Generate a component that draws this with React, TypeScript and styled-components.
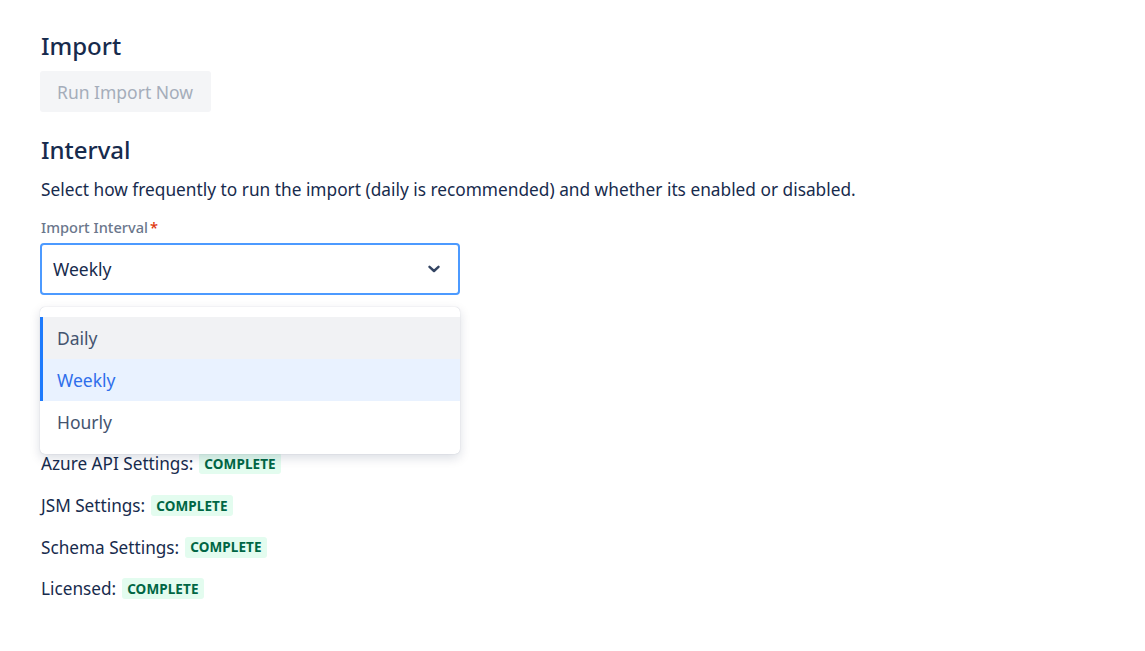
import React from "react";
import styled, { createGlobalStyle } from "styled-components";

const Global = createGlobalStyle`
  html, body { margin: 0; padding: 0; background: #fff; }
  body { font-family: "Noto Sans", "Open Sans", sans-serif; color: #172B4D; }
  * { box-sizing: border-box; }
`;

const Page = styled.div`
  padding: 30px 40px 30px 41px;
  display: flex;
  flex-direction: column;
  align-items: flex-start;
`;

const Heading = styled.h2<{ $top?: number }>`
  margin: ${(p) => p.$top ?? 0}px 0 0;
  font-size: 24px;
  font-weight: 500;
  line-height: 32px;
  color: #172B4D;
`;

const Button = styled.button`
  margin-top: 9px;
  margin-left: -1px;
  height: 41px;
  padding: 0 18px 0 17px;
  border: none;
  border-radius: 3px;
  background: #F4F5F7;
  color: #A5ADBA;
  font-family: inherit;
  font-size: 17.5px;
  cursor: not-allowed;
`;

const Description = styled.p`
  margin: 11px 0 0;
  font-size: 17.3px;
  line-height: 26px;
`;

const Label = styled.label`
  margin-top: 14px;
  font-size: 14.6px;
  line-height: 20px;
  color: #6B778C;
  font-weight: 500;
  display: flex;
  gap: 2px;
`;

const Required = styled.span`
  color: #DE350B;
`;

const Field = styled.div`
  position: relative;
  margin-top: 6px;
  margin-left: -1px;
  margin-bottom: 148px;
  width: 420px;
`;

const SelectBox = styled.div`
  height: 52px;
  border: 2px solid #4C9AFF;
  border-radius: 4px;
  display: flex;
  align-items: center;
  justify-content: space-between;
  padding: 0 18px 0 11px;
  font-size: 17.5px;
  color: #172B4D;
  background: #fff;
`;

const Menu = styled.div`
  position: absolute;
  top: 64px;
  left: 0;
  width: 420px;
  padding: 10px 0 11px;
  background: #fff;
  border-radius: 5px;
  box-shadow: 0 4px 11px rgba(9, 30, 66, 0.15), 0 0 1px rgba(9, 30, 66, 0.25);
  z-index: 2;
`;

const Option = styled.div<{ $state?: "hover" | "selected" }>`
  height: 42px;
  display: flex;
  align-items: center;
  padding-left: 14px;
  font-size: 17.5px;
  border-left: 3px solid
    ${(p) => (p.$state ? "#1D7AFC" : "transparent")};
  background: ${(p) =>
    p.$state === "hover" ? "#F1F2F4" : p.$state === "selected" ? "#E9F2FF" : "#fff"};
  color: ${(p) => (p.$state === "selected" ? "#2F6FEB" : "#44546F")};
`;

const StatusList = styled.div`
  display: flex;
  flex-direction: column;
`;

const StatusRow = styled.div`
  height: 41.7px;
  display: flex;
  align-items: center;
  gap: 6px;
  font-size: 17.2px;
  color: #172B4D;
`;

const Lozenge = styled.span`
  display: inline-flex;
  align-items: center;
  height: 21px;
  padding: 0 5px;
  border-radius: 3px;
  background: #E3FCEF;
  color: #006644;
  font-size: 13.5px;
  font-weight: 700;
  text-transform: uppercase;
  letter-spacing: 0.1px;
`;

const Chevron = () => (
  <svg width="12" height="8" viewBox="0 0 12 8">
    <path d="M1.5 1.8 6 6 10.5 1.8" fill="none" stroke="#344563" strokeWidth="2.4" strokeLinecap="round" strokeLinejoin="round" />
  </svg>
);

const statuses = ["Azure API Settings:", "JSM Settings:", "Schema Settings:", "Licensed:"];

export default function App() {
  return (
    <>
      <Global />
      <Page>
        <Heading>Import</Heading>
        <Button disabled>Run Import Now</Button>
        <Heading $top={22}>Interval</Heading>
        <Description>
          Select how frequently to run the import (daily is recommended) and whether its enabled or disabled.
        </Description>
        <Label>
          Import Interval<Required>*</Required>
        </Label>
        <Field>
          <SelectBox>
            <span>Weekly</span>
            <Chevron />
          </SelectBox>
          <Menu>
            <Option $state="hover">Daily</Option>
            <Option $state="selected">Weekly</Option>
            <Option>Hourly</Option>
          </Menu>
        </Field>
        <StatusList>
          {statuses.map((s) => (
            <StatusRow key={s}>
              {s}
              <Lozenge>Complete</Lozenge>
            </StatusRow>
          ))}
        </StatusList>
      </Page>
    </>
  );
}
